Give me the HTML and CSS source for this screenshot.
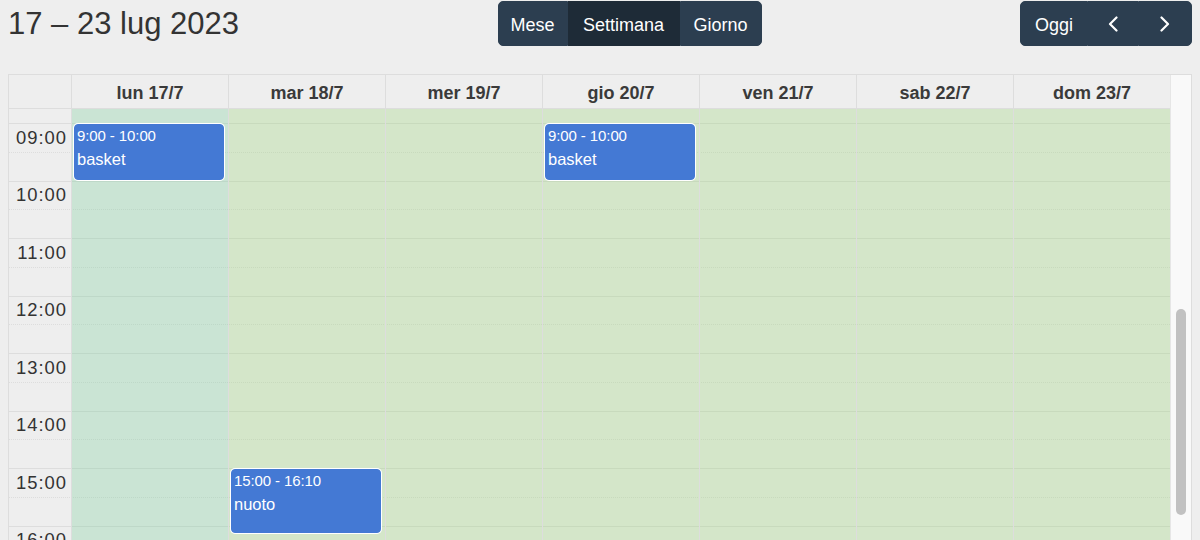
FILE: index.html
```html
<!DOCTYPE html>
<html lang="it">
<head>
<meta charset="utf-8">
<title>Calendario</title>
<link rel="stylesheet" href="styles.css">
</head>
<body>
<div class="toolbar">
  <h2 class="title">17 – 23 lug 2023</h2>
  <div class="btn-group">
    <button class="btn btn-mese">Mese</button>
    <button class="btn btn-sett active">Settimana</button>
    <button class="btn btn-giorno">Giorno</button>
  </div>
  <div class="btn-group">
    <button class="btn btn-oggi">Oggi</button>
    <button class="btn btn-prev" aria-label="prev"><svg width="10" height="16" viewBox="0 0 10 16"><polyline points="8.5,1.5 2,8 8.5,14.5" fill="none" stroke="#fff" stroke-width="2.2" stroke-linecap="round" stroke-linejoin="round"/></svg></button>
    <button class="btn btn-next" aria-label="next"><svg width="10" height="16" viewBox="0 0 10 16"><polyline points="1.5,1.5 8,8 1.5,14.5" fill="none" stroke="#fff" stroke-width="2.2" stroke-linecap="round" stroke-linejoin="round"/></svg></button>
  </div>
</div>

<div class="cal">
  <div class="main">
    <div class="head">
      <div class="head-axis"></div>
      <div class="head-cell">lun 17/7</div>
      <div class="head-cell">mar 18/7</div>
      <div class="head-cell">mer 19/7</div>
      <div class="head-cell">gio 20/7</div>
      <div class="head-cell">ven 21/7</div>
      <div class="head-cell">sab 22/7</div>
      <div class="head-cell">dom 23/7</div>
    </div>
    <div class="slots">
      <div class="row partial"><div class="label"></div><div></div></div>
      <div class="row"><div class="label">09:00</div><div></div></div>
      <div class="row minor"><div class="label"></div><div></div></div>
      <div class="row"><div class="label">10:00</div><div></div></div>
      <div class="row minor"><div class="label"></div><div></div></div>
      <div class="row"><div class="label">11:00</div><div></div></div>
      <div class="row minor"><div class="label"></div><div></div></div>
      <div class="row"><div class="label">12:00</div><div></div></div>
      <div class="row minor"><div class="label"></div><div></div></div>
      <div class="row"><div class="label">13:00</div><div></div></div>
      <div class="row minor"><div class="label"></div><div></div></div>
      <div class="row"><div class="label">14:00</div><div></div></div>
      <div class="row minor"><div class="label"></div><div></div></div>
      <div class="row"><div class="label">15:00</div><div></div></div>
      <div class="row minor"><div class="label"></div><div></div></div>
      <div class="row"><div class="label">16:00</div><div></div></div>
      <div class="row minor"><div class="label"></div><div></div></div>

      <div class="cols">
        <div class="col-axis"></div>
        <div class="col today">
          <div class="event" style="top:15px;height:56px">
            <div class="ev-time">9:00 - 10:00</div>
            <div class="ev-title">basket</div>
          </div>
        </div>
        <div class="col">
          <div class="event" style="top:360px;height:64px">
            <div class="ev-time">15:00 - 16:10</div>
            <div class="ev-title">nuoto</div>
          </div>
        </div>
        <div class="col"></div>
        <div class="col">
          <div class="event" style="top:15px;height:56px">
            <div class="ev-time">9:00 - 10:00</div>
            <div class="ev-title">basket</div>
          </div>
        </div>
        <div class="col"></div>
        <div class="col"></div>
        <div class="col"></div>
      </div>
    </div>
  </div>
  <div class="gutter"><div class="thumb"></div></div>
</div>
</body>
</html>
```

FILE: styles.css
```css
html, body {
  margin: 0;
  height: 100%;
  overflow: hidden;
  background: #eeeeee;
}

body {
  font-family: "Liberation Sans", Arial, sans-serif;
  color: #333333;
}

.toolbar {
  display: flex;
  justify-content: space-between;
  align-items: flex-start;
  height: 46px;
  padding: 0 8px;
}

.title {
  margin: 6px 0 0;
  font-size: 31px;
  font-weight: 400;
  line-height: 36px;
  color: #333333;
}

.btn-group {
  display: flex;
  margin-top: 1px;
}

.btn {
  display: flex;
  align-items: center;
  justify-content: center;
  height: 45px;
  box-sizing: border-box;
  margin: 0;
  padding: 3px 0 0;
  background: #2c3e50;
  border: 1px solid #2c3e50;
  color: #ffffff;
  font-family: "Liberation Sans", Arial, sans-serif;
  font-size: 18px;
}

.btn:first-child {
  border-radius: 5px 0 0 5px;
}

.btn:last-child {
  border-radius: 0 5px 5px 0;
}

.btn.active {
  background: #1e2b37;
  border-color: #1e2b37;
}

.btn-mese { width: 70px; }
.btn-sett { width: 112px; }
.btn-giorno { width: 82px; }
.btn-oggi { width: 68px; }
.btn-prev { width: 50px; padding-top: 1px; }
.btn-next { width: 54px; padding-top: 1px; }

.cal {
  display: flex;
  margin: 28px 8px 0;
  border: 1px solid #dddddd;
  border-bottom: 0;
}

.main {
  width: 1161px;
}

.head {
  display: grid;
  grid-template-columns: 62px repeat(7, 157px);
  height: 34px;
  box-sizing: border-box;
  border-bottom: 1px solid #dddddd;
}

.head-cell {
  border-left: 1px solid #dddddd;
  padding-top: 8px;
  text-align: center;
  font-size: 18px;
  font-weight: 700;
  line-height: 20px;
  color: #3a3a3a;
}

.slots {
  position: relative;
}

.row {
  display: grid;
  grid-template-columns: 62px 1fr;
  height: 28.75px;
  box-sizing: border-box;
  border-top: 1px solid #dddddd;
}

.row.minor {
  border-top-style: dotted;
}

.row.partial {
  height: 14px;
  border-top: 0;
}

.label {
  display: flex;
  align-items: center;
  justify-content: flex-end;
  padding-right: 4px;
  font-size: 18.4px;
  letter-spacing: 1px;
  color: #333333;
}

.cols {
  position: absolute;
  inset: 0;
  display: grid;
  grid-template-columns: 62px repeat(7, 157px);
}

.col {
  position: relative;
  border-left: 1px solid #dddddd;
  background: rgba(151, 211, 115, 0.3);
}

.col.today {
  background: rgba(118, 205, 151, 0.3);
}

.event {
  position: absolute;
  left: 2px;
  right: 4px;
  box-sizing: border-box;
  padding: 1.5px 2px 0;
  overflow: hidden;
  background: #4479d4;
  border: 1px solid #4479d4;
  border-radius: 4px;
  box-shadow: 0 0 0 1px #ffffff;
  color: #ffffff;
}

.ev-time {
  font-size: 15px;
  line-height: 18px;
  letter-spacing: -0.1px;
  white-space: nowrap;
}

.ev-title {
  margin-top: 4px;
  font-size: 16.5px;
  line-height: 20px;
}

.gutter {
  width: 20px;
  border-left: 1px solid #e6e6e6;
  background: #f9f9f9;
}

.thumb {
  width: 10px;
  height: 206px;
  margin: 234px 0 0 5px;
  border-radius: 5px;
  background: #c1c1c1;
}
```
